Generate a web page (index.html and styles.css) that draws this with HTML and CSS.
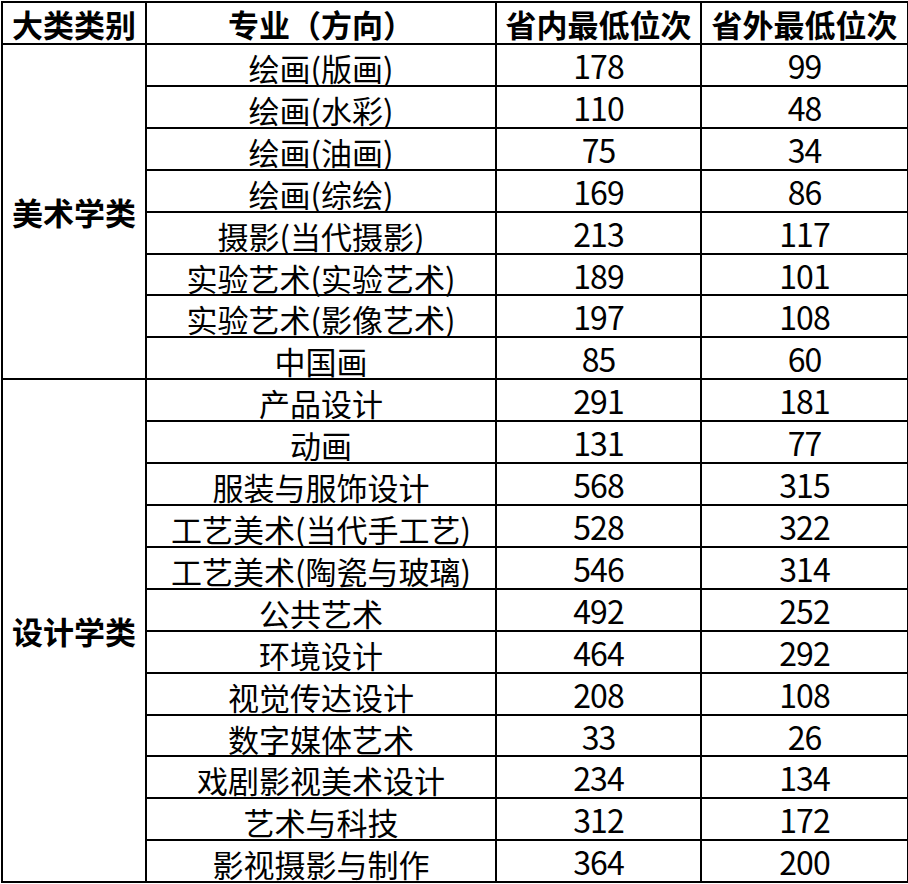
FILE: index.html
```html
<!DOCTYPE html>
<html lang="zh-CN">
<head>
<meta charset="utf-8">
<title>录取最低位次</title>
<link rel="stylesheet" href="styles.css">
</head>
<body>
<table class="rank">
  <colgroup>
    <col class="c1"><col class="c2"><col class="c3"><col class="c4">
  </colgroup>
  <thead>
    <tr><th>大类类别</th><th>专业（方向）</th><th>省内最低位次</th><th>省外最低位次</th></tr>
  </thead>
  <tbody>
    <tr><td class="cat" rowspan="8">美术学类</td><td>绘画(版画)</td><td class="num">178</td><td class="num">99</td></tr>
    <tr><td>绘画(水彩)</td><td class="num">110</td><td class="num">48</td></tr>
    <tr><td>绘画(油画)</td><td class="num">75</td><td class="num">34</td></tr>
    <tr><td>绘画(综绘)</td><td class="num">169</td><td class="num">86</td></tr>
    <tr><td>摄影(当代摄影)</td><td class="num">213</td><td class="num">117</td></tr>
    <tr><td>实验艺术(实验艺术)</td><td class="num">189</td><td class="num">101</td></tr>
    <tr><td>实验艺术(影像艺术)</td><td class="num">197</td><td class="num">108</td></tr>
    <tr><td>中国画</td><td class="num">85</td><td class="num">60</td></tr>
    <tr><td class="cat" rowspan="12">设计学类</td><td>产品设计</td><td class="num">291</td><td class="num">181</td></tr>
    <tr><td>动画</td><td class="num">131</td><td class="num">77</td></tr>
    <tr><td>服装与服饰设计</td><td class="num">568</td><td class="num">315</td></tr>
    <tr><td>工艺美术(当代手工艺)</td><td class="num">528</td><td class="num">322</td></tr>
    <tr><td>工艺美术(陶瓷与玻璃)</td><td class="num">546</td><td class="num">314</td></tr>
    <tr><td>公共艺术</td><td class="num">492</td><td class="num">252</td></tr>
    <tr><td>环境设计</td><td class="num">464</td><td class="num">292</td></tr>
    <tr><td>视觉传达设计</td><td class="num">208</td><td class="num">108</td></tr>
    <tr><td>数字媒体艺术</td><td class="num">33</td><td class="num">26</td></tr>
    <tr><td>戏剧影视美术设计</td><td class="num">234</td><td class="num">134</td></tr>
    <tr><td>艺术与科技</td><td class="num">312</td><td class="num">172</td></tr>
    <tr><td>影视摄影与制作</td><td class="num">364</td><td class="num">200</td></tr>
  </tbody>
</table>
</body>
</html>
```
FILE: styles.css
```css
html, body {
  margin: 0;
  padding: 0;
  background: #fff;
}
body {
  font-family: "Noto Sans CJK SC", "Microsoft YaHei", sans-serif;
  color: #000;
}
.rank {
  border-collapse: collapse;
  table-layout: fixed;
  width: 906px;
  margin: 1px 0 0 1px;
}
.rank col.c1 { width: 144px; }
.rank col.c2 { width: 350px; }
.rank col.c3 { width: 205px; }
.rank col.c4 { width: 207px; }
.rank th,
.rank td {
  border: 2px solid #000;
  padding: 6px 0 0;
  text-align: center;
  white-space: nowrap;
  font-size: 31px;
  line-height: 33.9px;
  vertical-align: top;
}
.rank th {
  font-weight: bold;
  padding-top: 1px;
  line-height: 39px;
}
.rank td.num {
  font-size: 32px;
  letter-spacing: -1px;
  padding-top: 2px;
  line-height: 37.9px;
}
.rank td.cat {
  font-weight: bold;
  vertical-align: middle;
  padding-top: 0;
}
```
